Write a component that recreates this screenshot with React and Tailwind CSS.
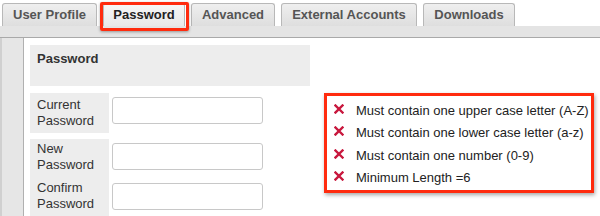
import React from 'react';

const tabs = [
  { label: 'User Profile', w: 'w-[95px]' },
  { label: 'Password', w: 'w-[82px]', active: true },
  { label: 'Advanced', w: 'w-[84px]' },
  { label: 'External Accounts', w: 'w-[136px]' },
  { label: 'Downloads', w: 'w-[92px]' },
];

const rules = [
  'Must contain one upper case letter (A-Z)',
  'Must contain one lower case letter (a-z)',
  'Must contain one number (0-9)',
  'Minimum Length =6',
];

const CrossIcon = () => (
  <svg width="10" height="10" viewBox="0 0 10 10" className="shrink-0 -mt-[3px]">
    <path d="M1.5 1.5 L8.5 8.5 M8.5 1.5 L1.5 8.5" stroke="#c8173d" strokeWidth="2.4" strokeLinecap="square" />
  </svg>
);

const FieldRow = ({ first, second, className, labelPad }) => (
  <div className={`flex ${className}`}>
    <div className={`w-[79px] h-[40px] bg-[#ededed] px-[7px] ${labelPad} text-[13px] leading-[16px] text-[#333]`}>
      <div>{first}</div>
      <div>{second}</div>
    </div>
    <input
      type="text"
      className="ml-[3px] mt-[4px] w-[151px] h-[27px] border border-[#c8c8c8] rounded-[3px] bg-white outline-none"
    />
  </div>
);

export default function App() {
  return (
    <div className="relative w-[600px] h-[216px] overflow-hidden bg-white font-['Liberation_Sans',Arial,sans-serif]">
      {/* tabs */}
      <div className="flex items-end gap-[6px] pl-[2px] pt-[3px]">
        {tabs.map((t) => (
          <div
            key={t.label}
            className={`${t.w} h-[23px] flex items-center justify-center rounded-t-[3px] border border-b-0 border-[#b8b8b8] text-[13px] font-bold ${
              t.active
                ? 'bg-gradient-to-b from-[#f7f7f7] to-[#e9e9e9] text-[#222]'
                : 'bg-gradient-to-b from-[#efefef] to-[#dedede] text-[#555]'
            }`}
          >
            {t.label}
          </div>
        ))}
      </div>
      <div className="h-[12px] bg-[#e4e4e4] border-b border-[#a9a9a9]" />

      {/* body */}
      <div className="flex h-[200px]">
        <div className="w-[24px] bg-[#e6e6e6] border-l-2 border-l-[#d0d0d0] border-r border-r-[#b0b0b0]" />
        <div className="pl-[6px] pt-[7px]">
          <div className="w-[280px] h-[41px] bg-[#ededed] px-[7px] pt-[4px] text-[13px] font-bold text-[#333]">
            Password
          </div>
          <FieldRow first="Current" second="Password" className="mt-[7px]" labelPad="pt-[4px]" />
          <FieldRow first="New" second="Password" className="mt-[6px]" labelPad="pt-[2px]" />
          <FieldRow first="Confirm" second="Password" className="" labelPad="pt-[1px]" />
        </div>
      </div>

      {/* highlight around active tab */}
      <div className="absolute left-[100px] top-[2px] w-[89px] h-[29px] border-[3px] border-[#ff2b0e] rounded-[2px] shadow-[0_1px_3px_rgba(0,0,0,0.35)]" />

      {/* password rules popup */}
      <div className="absolute left-[324px] top-[93px] w-[270px] h-[100px] border-[3px] border-[#ff2b0e] bg-white shadow-[1px_2px_4px_rgba(0,0,0,0.35)]">
        <ul className="pt-[3px] pl-[7px]">
          {rules.map((r) => (
            <li key={r} className="flex items-center h-[22.5px] text-[13px] text-[#222]">
              <CrossIcon />
              <span className="ml-[12px]">{r}</span>
            </li>
          ))}
        </ul>
      </div>
    </div>
  );
}
